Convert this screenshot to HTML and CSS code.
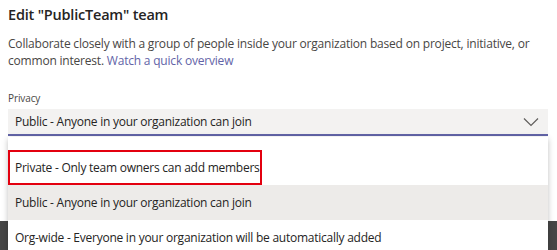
FILE: index.html
```html
<!DOCTYPE html>
<html lang="en">
<head>
    <meta charset="UTF-8">
    <title>Edit team</title>
    <link rel="stylesheet" href="styles.css">
</head>
<body>
    <div class="dialog">
        <h1>Edit "PublicTeam" team</h1>
        <p class="intro">Collaborate closely with a group of people inside your organization based on project, initiative, or common interest. <a href="#">Watch a quick overview</a></p>

        <div class="field">
            <label>Privacy</label>
            <div class="select">
                <span>Public - Anyone in your organization can join</span>
                <svg width="16" height="10" viewBox="0 0 16 10"><path d="M1 1.5 L8 8.5 L15 1.5" fill="none" stroke="#605e5c" stroke-width="1.2"/></svg>
            </div>
        </div>

        <ul class="menu">
            <li class="marked">Private - Only team owners can add members</li>
            <li class="hover">Public - Anyone in your organization can join</li>
            <li>Org-wide - Everyone in your organization will be automatically added</li>
        </ul>
    </div>
</body>
</html>
```

FILE: styles.css
```css
html, body {
    margin: 0;
    height: 100%;
    overflow: hidden;
}
body {
    font-family: "Open Sans", "Noto Sans", sans-serif;
    background: #464646;
    color: #484644;
}
.dialog {
    position: relative;
    background: #fff;
    height: 221px;
    padding: 0 9px 0 8px;
}
h1 {
    margin: 0;
    padding-top: 4px;
    font-size: 14.5px;
    font-weight: 600;
    color: #252423;
    line-height: 22px;
    letter-spacing: -0.2px;
}
.intro {
    margin: 9px 0 0;
    font-size: 12px;
    line-height: 17px;
    letter-spacing: -0.2px;
}
.intro a {
    color: #6264a7;
    text-decoration: none;
}
.field {
    margin-top: 22px;
}
.field label {
    display: block;
    font-size: 10px;
    line-height: 14px;
    letter-spacing: -0.1px;
}
.select {
    margin-top: 4px;
    height: 25px;
    background: #f3f2f1;
    border-bottom: 2px solid #6264a7;
    display: flex;
    align-items: center;
    justify-content: space-between;
    padding: 0 9px 0 7px;
    font-size: 12px;
    letter-spacing: -0.25px;
    color: #252423;
}
.menu {
    position: absolute;
    top: 137px;
    left: 8px;
    right: 9px;
    margin: 0;
    padding: 13px 0 0;
    list-style: none;
    background: #fff;
    box-shadow: 0 2px 6px rgba(0, 0, 0, 0.25);
    height: 100px;
    overflow: hidden;
    font-size: 12px;
    letter-spacing: -0.25px;
    color: #252423;
}
.menu li {
    height: 35px;
    line-height: 35px;
    padding: 0 7px;
    box-sizing: border-box;
    white-space: nowrap;
}
.menu li.marked {
    width: 254px;
    border: 2px solid #e3000f;
    line-height: 31px;
    padding-left: 5px;
}
.menu li.hover {
    background: #edebe9;
}
```
